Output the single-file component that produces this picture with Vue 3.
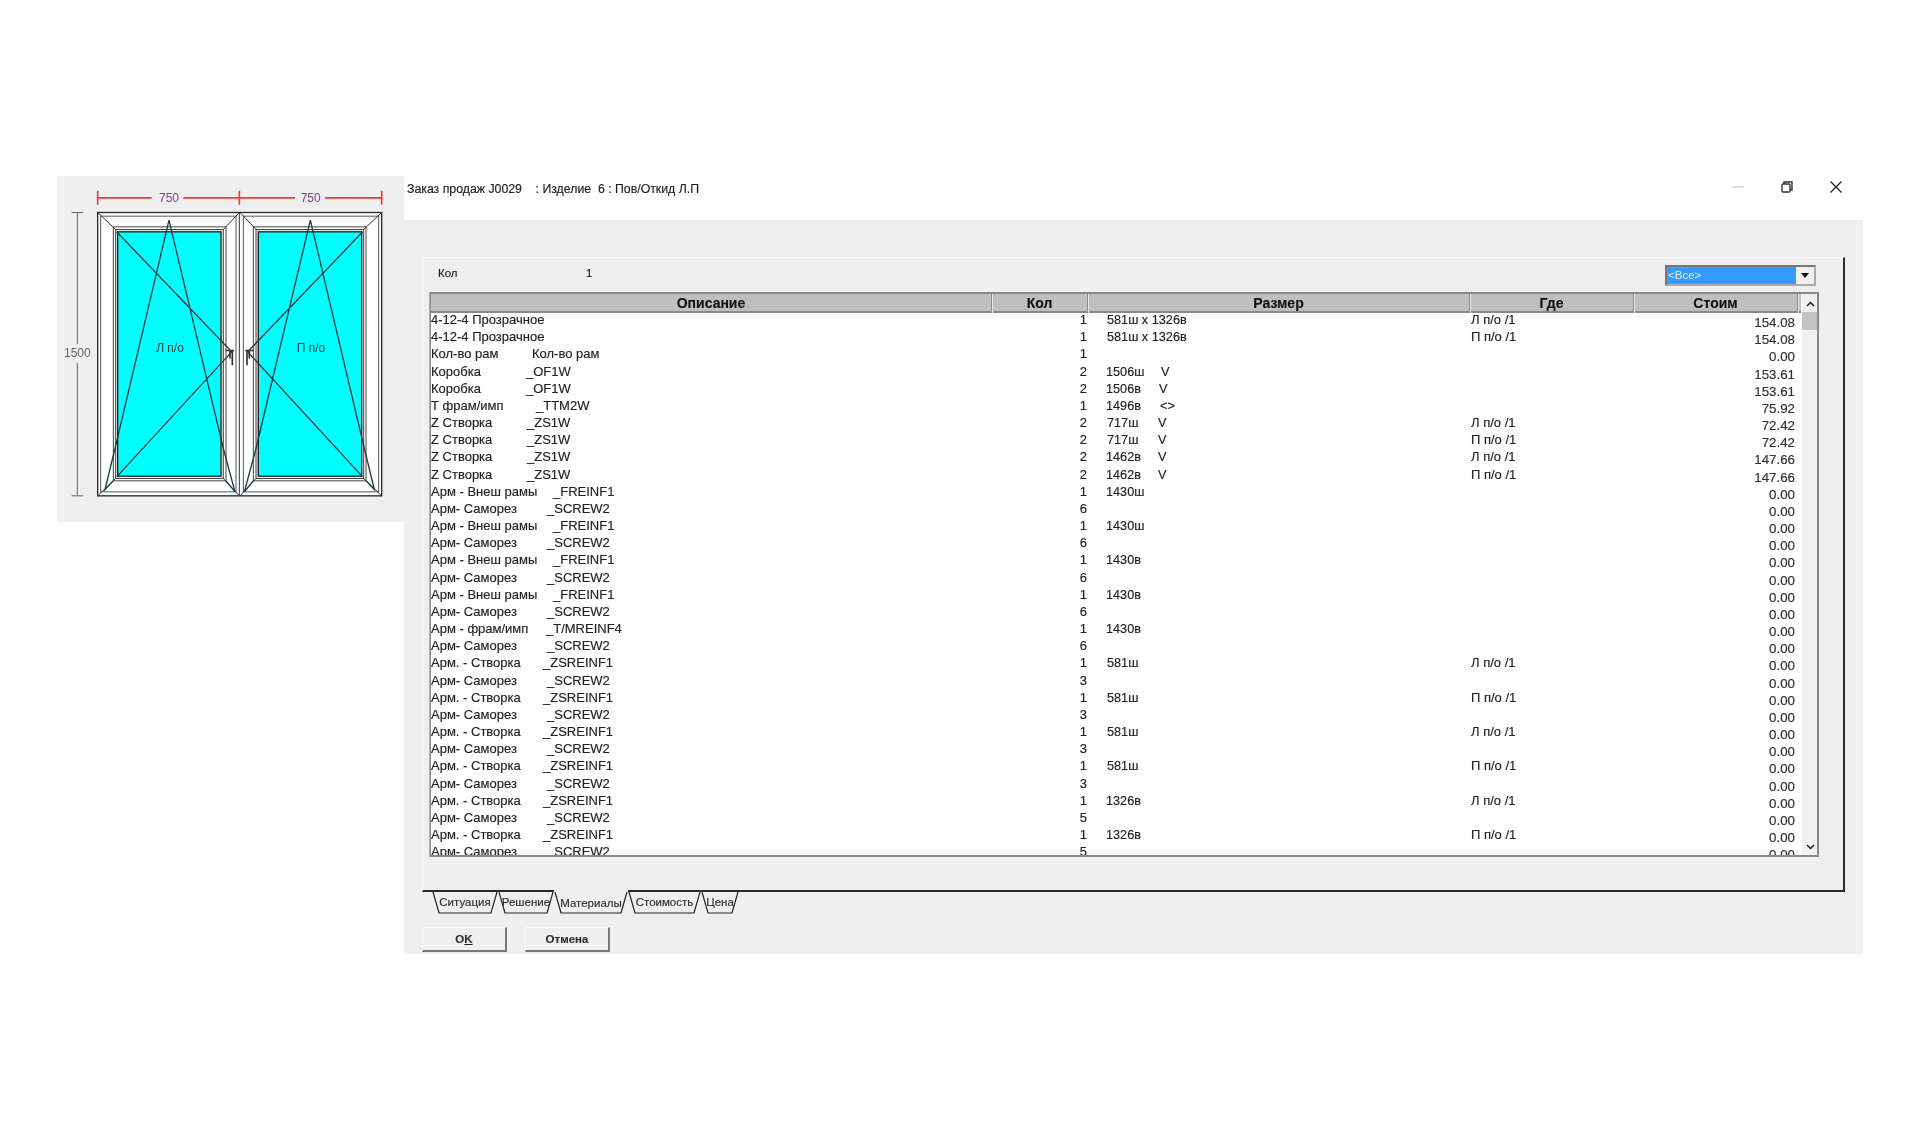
<script setup>
const L = 'Л п/о /1'
const P = 'П п/о /1'
const title = 'Заказ продаж J0029    : Изделие  6 : Пов/Откид Л.П'
const row = (name, code, codeX, q, s = '', sx = 0, m = '', mx = 0, w = '', c = '0.00') => ({ name, code, nameW: codeX - 431, q, s, sx: sx - 1088, m, mxW: mx ? mx - sx : 0, w, c })
const Z = 'Z Створка'
const rows = [
  row('4-12-4 Прозрачное', '', 640, 1, '581ш x 1326в', 1107, '', 0, L, '154.08'),
  row('4-12-4 Прозрачное', '', 640, 1, '581ш x 1326в', 1107, '', 0, P, '154.08'),
  row('Кол-во рам', 'Кол-во рам', 532, 1),
  row('Коробка', '_OF1W', 526, 2, '1506ш', 1106, 'V', 1161, '', '153.61'),
  row('Коробка', '_OF1W', 526, 2, '1506в', 1106, 'V', 1159, '', '153.61'),
  row('Т фрам/имп', '_TTM2W', 536, 1, '1496в', 1106, '<>', 1160, '', '75.92'),
  row(Z, '_ZS1W', 527, 2, '717ш', 1107, 'V', 1158, L, '72.42'),
  row(Z, '_ZS1W', 527, 2, '717ш', 1107, 'V', 1158, P, '72.42'),
  row(Z, '_ZS1W', 527, 2, '1462в', 1106, 'V', 1158, L, '147.66'),
  row(Z, '_ZS1W', 527, 2, '1462в', 1106, 'V', 1158, P, '147.66')
]
const A = 'Арм - Внеш рамы'
const S = 'Арм- Саморез'
const B = 'Арм. - Створка'
const screw = (q) => row(S, '_SCREW2', 547, q)
rows.push(
  row(A, '_FREINF1', 553, 1, '1430ш', 1106), screw(6),
  row(A, '_FREINF1', 553, 1, '1430ш', 1106), screw(6),
  row(A, '_FREINF1', 553, 1, '1430в', 1106), screw(6),
  row(A, '_FREINF1', 553, 1, '1430в', 1106), screw(6),
  row('Арм - фрам/имп', '_T/MREINF4', 546, 1, '1430в', 1106), screw(6),
  row(B, '_ZSREINF1', 543, 1, '581ш', 1107, '', 0, L), screw(3),
  row(B, '_ZSREINF1', 543, 1, '581ш', 1107, '', 0, P), screw(3),
  row(B, '_ZSREINF1', 543, 1, '581ш', 1107, '', 0, L), screw(3),
  row(B, '_ZSREINF1', 543, 1, '581ш', 1107, '', 0, P), screw(3),
  row(B, '_ZSREINF1', 543, 1, '1326в', 1106, '', 0, L), screw(5),
  row(B, '_ZSREINF1', 543, 1, '1326в', 1106, '', 0, P), screw(5)
)
const tabs = [
  { t: 'Ситуация', w: 66 },
  { t: 'Решение', w: 56 },
  { t: 'Материалы', w: 74, active: true },
  { t: 'Стоимость', w: 73 },
  { t: 'Цена', w: 38 }
]
const tabPath = (w) => `M1 0L7 21L${w - 7} 21L${w - 1} 0`
</script>

<template>
  <div class="page">
    <section class="drawing">
      <svg class="win" viewBox="21 18 1041 1037" width="347" height="346">
        <rect x="143" y="127" width="852" height="850" fill="#fff" stroke="#2a2a2a" stroke-width="4" />
        <g class="unit">
          <rect x="152" y="138" width="406" height="827" fill="#fff" stroke="#555" stroke-width="3" />
          <rect x="190" y="170" width="338" height="762" fill="#fff" stroke="#444" stroke-width="3" />
          <rect x="197" y="178" width="323" height="747" fill="#e8e8e8" stroke="#444" stroke-width="3" />
          <rect x="203" y="185" width="310" height="733" fill="#00ffff" stroke="#222" stroke-width="4" />
          <path d="M143 127L197 178M568 127L520 178M143 977L197 925M568 977L520 925" stroke="#333" stroke-width="3" fill="none" />
          <path d="M357 150L195 835L165 958L190 932M357 150L520 835L555 965L528 932M200 185L545 545L200 920" stroke="#1f3b40" stroke-width="4" fill="none" />
          <path d="M527 541H552M547 541V585M540 541V565" stroke="#333" stroke-width="5" fill="none" />
        </g>
        <g class="unit" transform="translate(1138 0) scale(-1 1)">
          <rect x="152" y="138" width="406" height="827" fill="#fff" stroke="#555" stroke-width="3" />
          <rect x="190" y="170" width="338" height="762" fill="#fff" stroke="#444" stroke-width="3" />
          <rect x="197" y="178" width="323" height="747" fill="#e8e8e8" stroke="#444" stroke-width="3" />
          <rect x="203" y="185" width="310" height="733" fill="#00ffff" stroke="#222" stroke-width="4" />
          <path d="M143 127L197 178M568 127L520 178M143 977L197 925M568 977L520 925" stroke="#333" stroke-width="3" fill="none" />
          <path d="M357 150L195 835L165 958L190 932M357 150L520 835L555 965L528 932M200 185L545 545L200 920" stroke="#1f3b40" stroke-width="4" fill="none" />
          <path d="M527 541H552M547 541V585M540 541V565" stroke="#333" stroke-width="5" fill="none" />
        </g>
        <path d="M568 127V977" stroke="#333" stroke-width="3" />
        <path d="M143 83H305M400 83H735M825 83H995M143 62V104M568 62V104M995 62V104" stroke="#f23a3a" stroke-width="5" fill="none" />
        <path d="M82 127V522M82 578V977M65 127H100M65 977H100" stroke="#666" stroke-width="3" fill="none" />
        <text class="dim" x="357" y="96">750</text>
        <text class="dim" x="782" y="96">750</text>
        <text class="dimv" x="82" y="562">1500</text>
        <text class="lab" x="360" y="546">Л п/о</text>
        <text class="lab" x="783" y="546">П п/о</text>
      </svg>
    </section>

    <section class="dialog">
      <header class="titlebar">
        <span class="title">{{ title }}</span>
        <div class="winbtns">
          <svg width="12" height="12" viewBox="0 0 12 12"><path d="M0 6H12" stroke="#ccc" stroke-width="1.2" /></svg>
          <svg width="12" height="12" viewBox="0 0 12 12" fill="none" stroke="#333" stroke-width="1.4"><rect x="1" y="3" width="8" height="8" rx="1" /><path d="M3 3V1H11V9H9" /></svg>
          <svg width="12" height="12" viewBox="0 0 12 12"><path d="M0.5 0.5L11.5 11.5M11.5 0.5L0.5 11.5" stroke="#222" stroke-width="1.3" /></svg>
        </div>
      </header>

      <div class="body">
        <div class="panel">
          <div class="toprow">
            <span class="kol">Кол</span>
            <span>1</span>
            <div class="combo">
              <span class="combo-val">&lt;Все&gt;</span>
              <span class="combo-btn"><svg width="8" height="5" viewBox="0 0 8 5"><path d="M0 0H8L4 5Z" fill="#111" /></svg></span>
            </div>
          </div>

          <div class="table">
            <div class="main">
              <div class="grid head">
                <span>Описание</span><span>Кол</span><span>Размер</span><span>Где</span><span>Стоим</span>
              </div>
              <div class="rows">
                <div v-for="(r, i) in rows" :key="i" class="grid row">
                  <span class="desc"><span class="nm" :style="{ width: r.nameW + 'px' }">{{ r.name }}</span>{{ r.code }}</span>
                  <span class="qty">{{ r.q }}</span>
                  <span class="size" :style="{ paddingLeft: r.sx + 'px' }"><span class="sz" :style="{ width: r.mxW + 'px' }">{{ r.s }}</span><span class="mark">{{ r.m }}</span></span>
                  <span class="where">{{ r.w }}</span>
                  <span class="cost">{{ r.c }}</span>
                </div>
              </div>
            </div>
            <div class="scroll">
              <span class="arrow"><svg width="9" height="6" viewBox="0 0 9 6"><path d="M1 5L4.5 1.5L8 5" fill="none" stroke="#222" stroke-width="1.5" /></svg></span>
              <span class="thumb"></span>
              <span class="track"></span>
              <span class="arrow"><svg width="9" height="6" viewBox="0 0 9 6"><path d="M1 1L4.5 4.5L8 1" fill="none" stroke="#222" stroke-width="1.5" /></svg></span>
            </div>
          </div>
        </div>

        <nav class="tabs">
          <div v-for="t in tabs" :key="t.t" class="tab" :class="{ active: t.active }" :style="{ width: t.w + 'px' }">
            <svg class="tabshape" :width="t.w" height="22" :viewBox="`0 0 ${t.w} 22`"><path :d="tabPath(t.w)" fill="none" stroke="#222" stroke-width="1.2" /></svg>
            <span>{{ t.t }}</span>
          </div>
        </nav>

        <div class="buttons">
          <button class="btn">O<u>K</u></button>
          <button class="btn">Отмена</button>
        </div>
      </div>
    </section>
  </div>
</template>

<style scoped>
.page {
  width: 1920px;
  height: 1131px;
  box-sizing: border-box;
  padding: 176px 0 0 57px;
  display: flex;
  align-items: flex-start;
  background: #fff;
  font-family: "Liberation Sans", Arial, sans-serif;
  font-size: 13px;
  color: #222;
  overflow: hidden;
  filter: blur(0.35px);
  -webkit-text-stroke: 0.15px #222;
}
.drawing {
  width: 347px;
  height: 346px;
  background: #efefef;
  flex: none;
}
.win { display: block; }
.dim { font: 36px "Liberation Sans", sans-serif; fill: #8a3a96; text-anchor: middle; }
.dimv { font: 36px "Liberation Sans", sans-serif; fill: #666; text-anchor: middle; }
.lab { font: 36px "Liberation Sans", sans-serif; fill: #1f3b40; text-anchor: middle; }

.dialog {
  width: 1459px;
  height: 778px;
  flex: none;
  display: flex;
  flex-direction: column;
  background: #efefef;
}
.titlebar {
  height: 44px;
  background: #fff;
  display: flex;
  justify-content: space-between;
  align-items: flex-start;
  padding: 6px 21px 0 3px;
  box-sizing: border-box;
  flex: none;
}
.title { white-space: pre; line-height: 14px; font-size: 12.3px; }
.winbtns { display: flex; gap: 37px; align-items: center; margin-top: -1px; }
.winbtns svg { display: block; }

.body { padding: 37px 0 0 18px; }
.panel {
  width: 1423px;
  height: 635px;
  box-sizing: border-box;
  border-top: 1px solid #f8f8f8;
  border-left: 1px solid #f8f8f8;
  border-right: 2px solid #2a2a2a;
  border-bottom: 2px solid #2a2a2a;
  padding-left: 7px;
}
.toprow {
  height: 34px;
  display: flex;
  align-items: center;
  font-size: 11.5px;
}
.kol { width: 156px; padding: 0 0 4px 8px; box-sizing: border-box; }
.toprow > span:nth-child(2) { padding-bottom: 4px; }
.combo {
  margin-left: auto;
  margin-right: 27px;
  width: 151px;
  height: 21px;
  box-sizing: border-box;
  border: 2px solid #777;
  border-right-color: #aaa;
  border-bottom-color: #aaa;
  background: #efefef;
  display: flex;
}
.combo-val {
  flex: 1;
  background: #3399ff;
  color: #e8f2ff;
  -webkit-text-stroke: 0;
  line-height: 15px;
  padding-left: 0;
  border: 1px dotted #c98a3a;
}
.combo-btn {
  width: 18px;
  display: flex;
  align-items: center;
  justify-content: center;
}
.table {
  width: 1389px;
  height: 565px;
  box-sizing: border-box;
  border: 1px solid #8a8a8a;
  border-top-width: 2px;
  border-right-width: 2px;
  border-bottom-width: 2px;
  box-shadow: -1px 0 0 #b0b0b0;
  background: #fff;
  display: flex;
  overflow: hidden;
}
.main { width: 1370px; flex: none; overflow: hidden; }
.grid {
  display: grid;
  grid-template-columns: 561px 96px 382px 164px 164px;
}
.head {
  height: 17px;
  background: #bfbfbf;
  border-bottom: 2px solid #8a8a8a;
  margin-bottom: -2px;
  font-weight: 700;
  font-size: 14px;
  line-height: 19px;
  color: #111;
  text-align: center;
}
.head span {
  border-right: 1px solid #8f8f8f;
  box-shadow: 1px 0 0 #e6e6e6;
}
.row {
  height: 17.18px;
  line-height: 17px;
  white-space: pre;
}
.desc { display: flex; }
.nm { display: block; flex: none; }
.qty { text-align: right; padding-right: 1px; }
.size { display: flex; font-size: 12.7px; line-height: 18px; }
.sz { flex: none; }
.where { padding-left: 1px; }
.cost { text-align: right; padding-right: 3px; margin-top: 3px; color: #333; font-size: 13.3px; }
.scroll {
  width: 16px;
  flex: none;
  margin-left: 1px;
  background: #f0f0f0;
  display: flex;
  flex-direction: column;
}
.arrow {
  height: 18px;
  flex: none;
  display: flex;
  align-items: center;
  justify-content: center;
  padding-top: 1px;
  box-sizing: border-box;
}
.thumb { height: 18px; flex: none; background: #c4c4c4; }
.track { flex: 1; }

.tabs {
  display: flex;
  height: 22px;
  padding-left: 10px;
}
.tab {
  position: relative;
  flex: none;
  display: flex;
  align-items: center;
  justify-content: center;
  font-size: 11.5px;
  color: #333;
  height: 22px;
  box-sizing: border-box;
  padding-bottom: 2px;
}
.tab.active {
  margin-top: -2px;
  height: 24px;
  background: #efefef;
  padding-top: 2px;
  padding-bottom: 0;
}
.tabshape { position: absolute; left: 0; bottom: 0; display: block; }
.buttons {
  display: flex;
  gap: 18px;
  margin-top: 13px;
}
.btn {
  width: 85px;
  height: 25px;
  padding: 0;
  font: 700 11.5px "Liberation Sans", sans-serif;
  color: #333;
  background: #efefef;
  border: 0;
  border-top: 1px solid #f8f8f8;
  border-left: 1px solid #f8f8f8;
  border-right: 2px solid #777;
  border-bottom: 2px solid #777;
}
</style>

<style>
html, body { margin: 0; background: #fff; }
</style>
